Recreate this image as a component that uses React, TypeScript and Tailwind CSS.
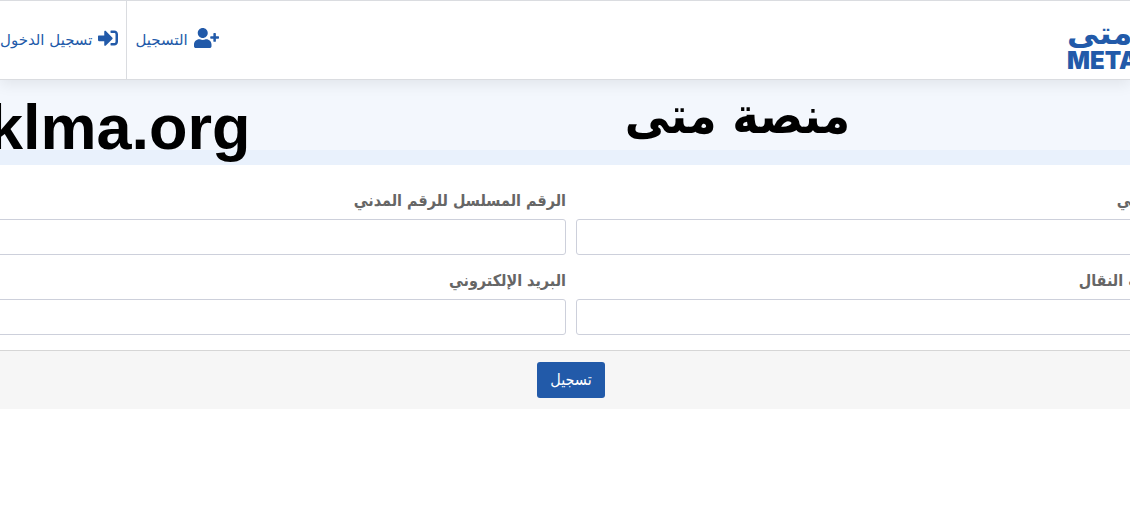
import React from 'react';
import { FaSignInAlt, FaUserPlus } from 'react-icons/fa';

interface Field {
  id: string;
  label: string;
  type: string;
}

const fields: Field[] = [
  { id: 'civil', label: 'الرقم المدني', type: 'text' },
  { id: 'serial', label: 'الرقم المسلسل للرقم المدني', type: 'text' },
  { id: 'mobile', label: 'رقم الهاتف النقال', type: 'tel' },
  { id: 'email', label: 'البريد الإلكتروني', type: 'email' },
];

const Header: React.FC = () => (
  <header className="relative flex h-20 items-stretch justify-between border-y border-[#dadce0] bg-white shadow-[0_4px_14px_rgba(0,0,0,0.08)]">
    <a href="#" aria-label="متى META" className="-mr-2 flex flex-col items-end pt-4 font-bold text-[#225aa9]">
      <span className="h-9 text-[32px] leading-8 font-['DejaVu_Sans',sans-serif]">متى</span>
      <span dir="ltr" className="text-[24px] leading-4 font-black font-['Inter',sans-serif]">META</span>
    </a>
    <nav className="flex text-[15px] text-[#225aa9] font-['DejaVu_Sans',sans-serif]">
      <a href="#register" className="flex items-center gap-[6px] px-2">
        <FaUserPlus className="mb-1 h-5 w-[25px]" />
        <span>التسجيل</span>
      </a>
      <a href="#login" className="flex items-center gap-[6px] border-r border-[#dadce0] pr-2">
        <FaSignInAlt className="mb-1 h-5 w-5" />
        <span className="whitespace-nowrap">تسجيل الدخول</span>
      </a>
    </nav>
  </header>
);

const Banner: React.FC = () => (
  <section className="flex h-[85px] justify-between border-b-[15px] border-[#e9f1fc] bg-[#f3f7fd] pr-[280px] font-bold text-black">
    <h1 className="text-[50px] leading-[72px]">منصة متى</h1>
    <p dir="ltr" className="-ml-3 pt-[15px] text-[63px] leading-[64px] font-['Liberation_Sans',sans-serif]">klma.org</p>
  </section>
);

const App: React.FC = () => (
  <div dir="rtl" className="overflow-x-clip bg-white text-[16px] font-['DejaVu_Sans_Condensed','DejaVu_Sans',sans-serif]">
    <Header />
    <Banner />
    <form onSubmit={(e) => e.preventDefault()} className="-mr-[80px] -ml-[68px]">
      <div className="grid grid-cols-2 gap-x-[10px] gap-y-[14px] pt-6 pb-[15px]">
        {fields.map((f) => (
          <div key={f.id}>
            <label htmlFor={f.id} className="mb-1 block h-[26px] leading-6 font-bold text-[#666666]">{f.label}</label>
            <input id={f.id} type={f.type} className="block h-9 w-full rounded-[3px] border border-[#cdd0db] bg-white px-3" />
          </div>
        ))}
      </div>
      <div className="flex justify-center border-t border-[#d6d6d6] bg-[#f6f6f6] pt-[11px] pb-[11px]">
        <button type="submit" className="h-9 w-[68px] rounded-[3px] bg-[#225aa9] font-medium text-white">تسجيل</button>
      </div>
    </form>
  </div>
);

export default App;
